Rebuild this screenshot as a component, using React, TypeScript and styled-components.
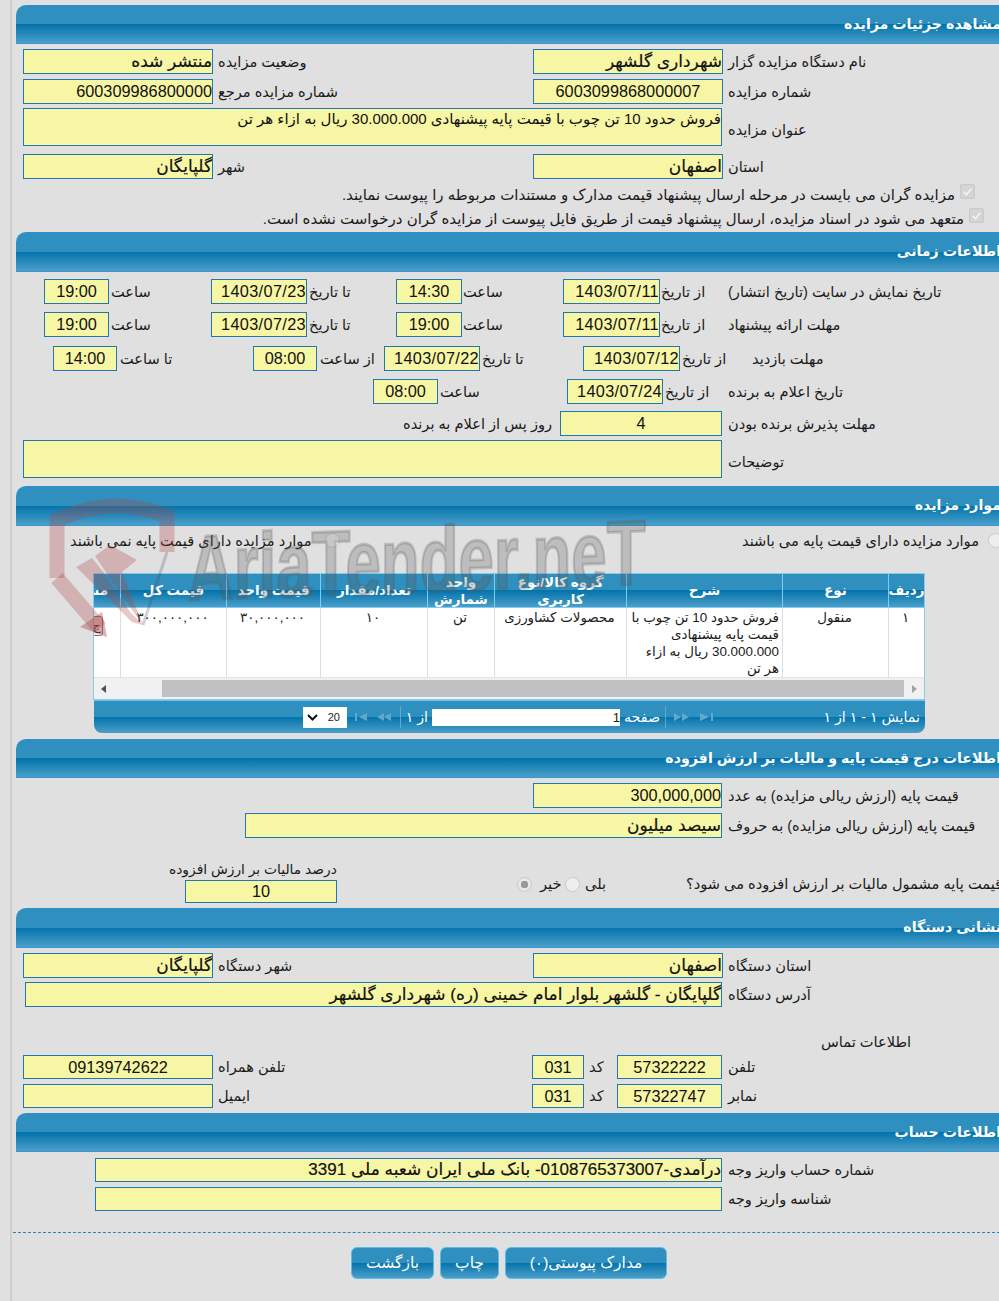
import React from "react";
import styled, { createGlobalStyle } from "styled-components";

const Global = createGlobalStyle`
  html, body { margin: 0; padding: 0; background: #e0e0e0; }
  body { font-family: "Liberation Sans", "DejaVu Sans", sans-serif; color: #1a1a1a; }
`;

const gloss = "linear-gradient(to bottom, #2f8fbe 0, #2f8fbe 49%, #0473ac 50%, #4a9fc8 100%)";

const Viewport = styled.div`
  position: relative;
  width: 999px;
  height: 1301px;
  overflow: hidden;
  background: #e0e0e0;
`;

const Frame = styled.div`
  width: 1010px;
  height: 1301px;
  margin-left: 10px;
  border-left: 2px solid #cfcfcf;
  padding: 5px 0 0 4px;
  box-sizing: border-box;
`;

const Bar = styled.div<{ $h?: number }>`
  height: ${(p) => p.$h ?? 39}px;
  width: 990px;
  box-sizing: border-box;
  border-top: 1px solid #2b8fd0;
  border-bottom: 1px solid #3a97d2;
  border-radius: 10px 0 0 0;
  background: ${gloss};
  color: #fff;
  font-size: 14.2px;
  font-weight: bold;
  direction: rtl;
  text-align: right;
  padding-right: 5px;
  line-height: 37px;
  white-space: nowrap;
`;

const Rows = styled.div<{ $h: number }>`
  display: flow-root;
  height: ${(p) => p.$h}px;
`;

const Row = styled.div<{ $top: number; $h?: number }>`
  display: flex;
  align-items: center;
  height: ${(p) => p.$h ?? 25}px;
  margin-top: ${(p) => p.$top}px;
`;

const Field = styled.div<{ $w: number; $ml?: number; $h?: number; $center?: boolean; $title?: boolean; $ar?: boolean }>`
  flex: none;
  box-sizing: border-box;
  width: ${(p) => p.$w}px;
  height: ${(p) => p.$h ?? 25}px;
  margin-left: ${(p) => p.$ml ?? 0}px;
  border: 1px solid #1f78b0;
  background: #f7f6a5;
  color: #111;
  font-size: ${(p) => (p.$title ? 15 : p.$ar ? 17 : 16.3)}px;
  line-height: ${(p) => (p.$title ? 19 : (p.$h ?? 25) - 2)}px;
  direction: rtl;
  text-align: ${(p) => (p.$center ? "center" : "right")};
  white-space: nowrap;
  overflow: hidden;
  -webkit-text-stroke: ${(p) => (p.$ar ? "0.2px #111" : "0")};
`;

const DateField = styled(Field)`
  letter-spacing: 0.35px;
`;

const Label = styled.div<{ $w: number; $ml?: number; $drop?: number }>`
  flex: none;
  width: ${(p) => p.$w}px;
  margin-left: ${(p) => p.$ml ?? 0}px;
  margin-top: ${(p) => p.$drop ?? 0}px;
  font-size: 14.6px;
  line-height: 20px;
  direction: rtl;
  text-align: left;
  white-space: nowrap;
`;

const CheckRow = styled.div<{ $top: number; $right: number }>`
  display: flex;
  align-items: center;
  gap: 5px;
  height: 20px;
  margin-top: ${(p) => p.$top}px;
  margin-right: ${(p) => p.$right}px;
  font-size: 15px;
  direction: rtl;
  white-space: nowrap;
`;

const Checkbox = styled.span`
  flex: none;
  display: flex;
  align-items: center;
  justify-content: center;
  width: 15px;
  height: 15px;
  margin-top: -7px;
  background: #d4d4d4;
  border: 1px solid #c8c8c8;
  border-radius: 2px;
  box-sizing: border-box;
`;

const Radio = styled.span<{ $checked?: boolean; $ml?: number; $drop?: number }>`
  flex: none;
  width: 15px;
  height: 15px;
  box-sizing: border-box;
  margin-left: ${(p) => p.$ml ?? 0}px;
  margin-top: ${(p) => p.$drop ?? 0}px;
  border: 1px solid #c9c9c9;
  border-radius: 50%;
  background: ${(p) => (p.$checked ? "radial-gradient(circle, #9a9a9a 0 3.5px, #e8e8e8 4px)" : "#eeeeee")};
`;

const Grid = styled.div`
  width: 832px;
  margin: 20px 0 0 77px;
  box-sizing: border-box;
  direction: ltr;
`;

const GridFrame = styled.div`
  border: 1px solid #8cc9e8;
  box-sizing: border-box;
  height: 127px;
  overflow: hidden;
`;

const HeadRow = styled.div`
  display: flex;
  height: 34px;
  background: ${gloss};
  border-bottom: 1px solid #7fcdf2;
  box-sizing: border-box;
`;

const HeadCell = styled.div<{ $w: number; $clip?: boolean }>`
  flex: none;
  display: flex;
  align-items: center;
  justify-content: ${(p) => (p.$clip ? "flex-start" : "center")};
  box-sizing: border-box;
  width: ${(p) => p.$w}px;
  padding-right: ${(p) => (p.$clip ? 12 : 0)}px;
  border-right: 1px solid #7fcdf2;
  color: #fff;
  font-size: 13.5px;
  font-weight: bold;
  line-height: 17px;
  direction: rtl;
  text-align: center;
  overflow: hidden;
  white-space: ${(p) => (p.$clip ? "nowrap" : "normal")};
`;

const BodyRow = styled.div`
  display: flex;
  height: 69px;
  background: #fff;
`;

const BodyCell = styled.div<{ $w: number; $right?: boolean; $spaced?: boolean }>`
  flex: none;
  position: relative;
  box-sizing: border-box;
  width: ${(p) => p.$w}px;
  border-right: 1px solid #dedede;
  padding: 1px 3px 0 1px;
  font-size: 13.4px;
  line-height: 17px;
  letter-spacing: ${(p) => (p.$spaced ? 1.7 : 0)}px;
  direction: rtl;
  text-align: ${(p) => (p.$right ? "right" : "center")};
  overflow: hidden;
`;

const RowButton = styled.span`
  position: absolute;
  left: -13px;
  top: 8px;
  width: 22px;
  height: 20px;
  padding-right: 1px;
  border: 1px solid #777;
  border-radius: 3px;
  background: #efefef;
  font-size: 13px;
  line-height: 18px;
  text-align: right;
  box-sizing: border-box;
`;

const ScrollBar = styled.div`
  display: flex;
  align-items: center;
  height: 22px;
  background: #f1f1f1;
  border-top: 1px solid #e3e3e3;
  box-sizing: border-box;
`;

const ScrollArrow = styled.span<{ $side: "l" | "r" }>`
  flex: none;
  width: 0;
  height: 0;
  margin: 0 ${(p) => (p.$side === "l" ? 8 : 7)}px 0 ${(p) => (p.$side === "l" ? 7 : 8)}px;
  border-top: 4px solid transparent;
  border-bottom: 4px solid transparent;
  border-right: ${(p) => (p.$side === "l" ? "5px solid #505050" : "0")};
  border-left: ${(p) => (p.$side === "r" ? "5px solid #a3a3a3" : "0")};
`;

const ScrollThumb = styled.div`
  flex: 1;
  height: 17px;
  margin-left: 48px;
  background: #c1c1c1;
`;

const Pager = styled.div`
  display: flex;
  align-items: center;
  height: 33px;
  margin-left: 1px;
  border-top: 1px solid #6cc3ec;
  border-radius: 0 0 8px 8px;
  background: ${gloss};
  color: #fff;
  font-size: 14.2px;
  box-sizing: border-box;
  direction: ltr;
`;

const PageSelect = styled.div`
  flex: none;
  display: flex;
  align-items: center;
  justify-content: space-between;
  box-sizing: border-box;
  width: 44px;
  height: 21px;
  margin-left: 209px;
  padding: 0 7px 0 4px;
  background: #fff;
  color: #222;
  font-size: 11px;
`;

const PagerIcon = styled.svg<{ $ml: number }>`
  flex: none;
  margin-left: ${(p) => p.$ml}px;
  fill: #5fa9cd;
`;

const PagerSep = styled.span<{ $ml: number }>`
  flex: none;
  width: 1px;
  height: 22px;
  margin-left: ${(p) => p.$ml}px;
  background: #5fa9cd;
`;

const PagerText = styled.span<{ $ml: number; $w: number }>`
  flex: none;
  width: ${(p) => p.$w}px;
  margin-left: ${(p) => p.$ml}px;
  direction: rtl;
  text-align: left;
  white-space: nowrap;
`;

const PageInput = styled.div`
  flex: none;
  box-sizing: border-box;
  width: 188px;
  height: 17px;
  margin-left: 4px;
  background: #fff;
  color: #222;
  font-size: 13px;
  line-height: 17px;
  text-align: right;
`;

const Stack = styled.div`
  display: flex;
  flex-direction: column;
  gap: 2px;
  flex: none;
  width: 321px;
`;

const Caption = styled.div`
  margin-left: 153px;
  font-size: 13.8px;
  line-height: 16px;
  direction: rtl;
  text-align: left;
  white-space: nowrap;
`;

const Dashed = styled.div`
  margin-top: 21px;
  margin-left: -3px;
  border-top: 1px dashed #2a84b8;
`;

const Buttons = styled.div`
  display: flex;
  gap: 6px;
  margin: 14px 0 0 335px;
`;

const Btn = styled.div<{ $w: number }>`
  flex: none;
  box-sizing: border-box;
  width: ${(p) => p.$w}px;
  height: 32px;
  border: 1px solid #5bbce8;
  border-radius: 6px;
  background: ${gloss};
  color: #fff;
  font-size: 15.5px;
  line-height: 30px;
  direction: rtl;
  text-align: center;
`;

const Watermark = styled.div`
  position: absolute;
  left: 48px;
  top: 498px;
  width: 620px;
  height: 150px;
  pointer-events: none;
`;

const Shield = styled.svg`
  position: absolute;
  left: 0;
  top: 0;
`;

const WmText = styled.div`
  position: absolute;
  left: 140px;
  top: 24px;
  font-family: "Liberation Sans", sans-serif;
  font-weight: bold;
  font-size: 92px;
  line-height: 92px;
  color: rgba(90, 90, 90, 0.26);
  -webkit-text-stroke: 3px rgba(90, 90, 90, 0.26);
  paint-order: stroke fill;
  white-space: nowrap;
  transform: skewY(-2deg) scaleX(0.69);
  transform-origin: left top;
`;

const Tick = () => (
  <svg width="11" height="11" viewBox="0 0 12 12">
    <path d="M2 6.5 L5 9.5 L10 3" fill="none" stroke="#f2f2f2" strokeWidth="2" />
  </svg>
);

const columns = [27, 106, 94, 107, 67, 132, 156, 106, 36];

const App: React.FC = () => (
  <Viewport>
    <Global />
    <Frame>
      <Bar>مشاهده جزئیات مزایده</Bar>
      <Rows $h={188}>
        <Row $top={5}><Field $w={190} $ml={7} $ar>منتشر شده</Field><Label $w={315} $ml={5}>وضعیت مزایده</Label><Field $w={190} $ar>شهرداری گلشهر</Field><Label $w={200} $ml={5}>نام دستگاه مزایده گزار</Label></Row>
        <Row $top={5}><Field $w={190} $ml={7}>600309986800000</Field><Label $w={315} $ml={5}>شماره مزایده مرجع</Label><Field $w={190} $center>6003099868000007</Field><Label $w={200} $ml={5}>شماره مزایده</Label></Row>
        <Row $top={4} $h={38}><Field $w={699} $ml={7} $h={38} $title>فروش حدود 10 تن چوب با قیمت پایه پیشنهادی 30.000.000 ریال به ازاء هر تن</Field><Label $w={200} $ml={6} $drop={6}>عنوان مزایده</Label></Row>
        <Row $top={8}><Field $w={190} $ml={7} $ar>گلپایگان</Field><Label $w={315} $ml={5}>شهر</Label><Field $w={190} $ar>اصفهان</Field><Label $w={200} $ml={5}>استان</Label></Row>
        <CheckRow $top={6} $right={45}><Checkbox><Tick /></Checkbox><span>مزایده گران می بایست در مرحله ارسال پیشنهاد قیمت مدارک و مستندات مربوطه را پیوست نمایند.</span></CheckRow>
        <CheckRow $top={4} $right={36}><Checkbox><Tick /></Checkbox><span>متعهد می شود در اسناد مزایده، ارسال پیشنهاد قیمت از طریق فایل پیوست از مزایده گران درخواست نشده است.</span></CheckRow>
      </Rows>
      <Bar $h={40}>اطلاعات زمانی</Bar>
      <Rows $h={214}>
        <Row $top={7}><Field $w={65} $ml={28} $center>19:00</Field><Label $w={100} $ml={2}>ساعت</Label><DateField $w={96}>1403/07/23</DateField><Label $w={87} $ml={2}>تا تاریخ</Label><Field $w={66} $center>14:30</Field><Label $w={100} $ml={1}>ساعت</Label><DateField $w={97}>1403/07/11</DateField><Label $w={67} $ml={1}>از تاریخ</Label><Label $w={250}>تاریخ نمایش در سایت (تاریخ انتشار)</Label></Row>
        <Row $top={8}><Field $w={65} $ml={28} $center>19:00</Field><Label $w={100} $ml={2}>ساعت</Label><DateField $w={96}>1403/07/23</DateField><Label $w={87} $ml={2}>تا تاریخ</Label><Field $w={66} $center>19:00</Field><Label $w={100} $ml={1}>ساعت</Label><DateField $w={97}>1403/07/11</DateField><Label $w={67} $ml={1}>از تاریخ</Label><Label $w={250}>مهلت ارائه پیشنهاد</Label></Row>
        <Row $top={9}><Field $w={64} $ml={37} $center>14:00</Field><Label $w={133} $ml={3}>تا ساعت</Label><Field $w={64} $center>08:00</Field><Label $w={64} $ml={3}>از ساعت</Label><DateField $w={96}>1403/07/22</DateField><Label $w={101} $ml={2}>تا تاریخ</Label><DateField $w={97}>1403/07/12</DateField><Label $w={70} $ml={2}>از تاریخ</Label><Label $w={200}>مهلت بازدید</Label></Row>
        <Row $top={8}><Field $w={65} $ml={357} $center>08:00</Field><Label $w={127} $ml={2}>ساعت</Label><DateField $w={96}>1403/07/24</DateField><Label $w={63} $ml={2}>از تاریخ</Label><Label $w={200}>تاریخ اعلام به برنده</Label></Row>
        <Row $top={7}><Label $w={157} $ml={387}>روز پس از اعلام به برنده</Label><Field $w={162} $center>4</Field><Label $w={200} $ml={6}>مهلت پذیرش برنده بودن</Label></Row>
        <Row $top={4} $h={38}><Field $w={699} $ml={7} $h={38} /><Label $w={200} $ml={6} $drop={6}>توضیحات</Label></Row>
      </Rows>
      <Bar $h={40}>موارد مزایده</Bar>
      <Rows $h={213}>
        <Row $top={2}>
          <Label $w={250} $ml={54}>موارد مزایده دارای قیمت پایه نمی باشند</Label>
          <Radio $ml={5} />
          <Label $w={244} $ml={402}>موارد مزایده دارای قیمت پایه می باشند</Label>
          <Radio $ml={2} />
        </Row>
        <Grid>
          <GridFrame>
            <HeadRow>
              <HeadCell $w={columns[0]} $clip>مشاهده</HeadCell>
              <HeadCell $w={columns[1]}>قیمت کل</HeadCell>
              <HeadCell $w={columns[2]}>قیمت واحد</HeadCell>
              <HeadCell $w={columns[3]}>تعداد/مقدار</HeadCell>
              <HeadCell $w={columns[4]}>واحد شمارش</HeadCell>
              <HeadCell $w={columns[5]}>گروه کالا/نوع کاربری</HeadCell>
              <HeadCell $w={columns[6]}>شرح</HeadCell>
              <HeadCell $w={columns[7]}>نوع</HeadCell>
              <HeadCell $w={columns[8]}>ردیف</HeadCell>
            </HeadRow>
            <BodyRow>
              <BodyCell $w={columns[0]}><RowButton>ج</RowButton></BodyCell>
              <BodyCell $w={columns[1]} $spaced>۳۰۰,۰۰۰,۰۰۰</BodyCell>
              <BodyCell $w={columns[2]} $spaced>۳۰,۰۰۰,۰۰۰</BodyCell>
              <BodyCell $w={columns[3]} $spaced>۱۰</BodyCell>
              <BodyCell $w={columns[4]}>تن</BodyCell>
              <BodyCell $w={columns[5]}>محصولات کشاورزی</BodyCell>
              <BodyCell $w={columns[6]} $right>فروش حدود 10 تن چوب با قیمت پایه پیشنهادی 30.000.000 ریال به ازاء هر تن</BodyCell>
              <BodyCell $w={columns[7]}>منقول</BodyCell>
              <BodyCell $w={columns[8]}>۱</BodyCell>
            </BodyRow>
            <ScrollBar>
              <ScrollArrow $side="l" />
              <ScrollThumb />
              <ScrollArrow $side="r" />
            </ScrollBar>
          </GridFrame>
          <Pager>
            <PageSelect>
              <svg width="11" height="7" viewBox="0 0 11 7"><path d="M1 1 L5.5 5.5 L10 1" fill="none" stroke="#111" strokeWidth="2" /></svg>
              <span>20</span>
            </PageSelect>
            <PagerIcon $ml={8} width="12" height="8" viewBox="0 0 12 8"><path d="M0 0h2v8H0zM12 0v8L4 4z" /></PagerIcon>
            <PagerIcon $ml={10} width="14" height="8" viewBox="0 0 14 8"><path d="M7 0v8L0 4zM14 0v8L7 4z" /></PagerIcon>
            <PagerSep $ml={9} />
            <PagerText $ml={7} $w={20}>از ۱</PagerText>
            <PageInput>1</PageInput>
            <PagerText $ml={5} $w={35}>صفحه</PagerText>
            <PagerSep $ml={5} />
            <PagerIcon $ml={8} width="15" height="8" viewBox="0 0 15 8"><path d="M0 0v8l7-4zM8 0v8l7-4z" /></PagerIcon>
            <PagerIcon $ml={11} width="13" height="8" viewBox="0 0 13 8"><path d="M0 0v8l9-4zM11 0h2v8h-2z" /></PagerIcon>
            <PagerText $ml={111} $w={96}>نمایش ۱ - ۱ از ۱</PagerText>
          </Pager>
        </Grid>
      </Rows>
      <Bar>اطلاعات درج قیمت پایه و مالیات بر ارزش افزوده</Bar>
      <Rows $h={130}>
        <Row $top={5}><Field $w={189} $ml={517}>300,000,000</Field><Label $w={290} $ml={6}>قیمت پایه (ارزش ریالی مزایده) به عدد</Label></Row>
        <Row $top={5}><Field $w={477} $ml={229} $ar>سیصد میلیون</Field><Label $w={290} $ml={6}>قیمت پایه (ارزش ریالی مزایده) به حروف</Label></Row>
        <Row $top={24} $h={41}>
          <Stack>
            <Caption>درصد مالیات بر ارزش افزوده</Caption>
            <Field $w={152} $ml={169} $h={23} $center>10</Field>
          </Stack>
          <Radio $checked $ml={180} $drop={3} />
          <Label $w={24} $ml={8} $drop={2}>خیر</Label>
          <Radio $ml={1} $drop={3} />
          <Label $w={30} $ml={5} $drop={2}>بلی</Label>
          <Label $w={340} $ml={71} $drop={2}>قیمت پایه مشمول مالیات بر ارزش افزوده می شود؟</Label>
        </Row>
      </Rows>
      <Bar $h={40}>نشانی دستگاه</Bar>
      <Rows $h={165}>
        <Row $top={5}><Field $w={190} $ml={7} $ar>گلپایگان</Field><Label $w={315} $ml={5}>شهر دستگاه</Label><Field $w={190} $ar>اصفهان</Field><Label $w={200} $ml={5}>استان دستگاه</Label></Row>
        <Row $top={4}><Field $w={697} $ml={9} $ar>گلپایگان - گلشهر بلوار امام خمینی (ره) شهرداری گلشهر</Field><Label $w={200} $ml={6}>آدرس دستگاه</Label></Row>
        <Row $top={23} $h={23}><Label $w={100} $ml={805}>اطلاعات تماس</Label></Row>
        <Row $top={2} $h={24}><Field $w={190} $ml={7} $h={24} $center>09139742622</Field><Label $w={314} $ml={5}>تلفن همراه</Label><Field $w={52} $h={24} $center>031</Field><Label $w={28} $ml={5}>کد</Label><Field $w={105} $h={24} $center>57322222</Field><Label $w={100} $ml={6}>تلفن</Label></Row>
        <Row $top={5} $h={24}><Field $w={190} $ml={7} $h={24} /><Label $w={314} $ml={5}>ایمیل</Label><Field $w={52} $h={24} $center>031</Field><Label $w={28} $ml={5}>کد</Label><Field $w={105} $h={24} $center>57322747</Field><Label $w={100} $ml={6}>نمابر</Label></Row>
      </Rows>
      <Bar>اطلاعات حساب</Bar>
      <Row $top={6} $h={24}><Field $w={627} $ml={79} $h={24} $ar>درآمدی-0108765373007- بانک ملی ایران شعبه ملی 3391</Field><Label $w={200} $ml={6}>شماره حساب واریز وجه</Label></Row>
      <Row $top={5} $h={24}><Field $w={627} $ml={79} $h={24} /><Label $w={200} $ml={6}>شناسه واریز وجه</Label></Row>
      <Dashed />
      <Buttons>
        <Btn $w={83}>بازگشت</Btn>
        <Btn $w={59}>چاپ</Btn>
        <Btn $w={162}>مدارک پیوستی(۰)</Btn>
      </Buttons>
    </Frame>
    <Watermark>
      <Shield width="135" height="150" viewBox="48 498 135 150">
        <path d="M57 578 V520 Q112 494 167 516 V552" fill="none" stroke="rgba(176,70,70,0.3)" strokeWidth="15" />
        <path d="M57 578 L100 628" fill="none" stroke="rgba(176,70,70,0.3)" strokeWidth="15" />
        <path d="M80 627 L107 637 L102 612 Z" fill="rgba(176,70,70,0.42)" />
        <path d="M76 567 L92 558 L104 573 L130 612 L143 625 L132 622 Z" fill="rgba(176,70,70,0.3)" />
        <path d="M95 556 L110 545 L137 560 L122 572 L143 625 L118 590 Z" fill="rgba(176,70,70,0.3)" />
        <path d="M143 625 L167 552" fill="none" stroke="rgba(70,70,100,0.25)" strokeWidth="3" />
      </Shield>
      <WmText>AriaTender.neT</WmText>
    </Watermark>
  </Viewport>
);

export default App;
